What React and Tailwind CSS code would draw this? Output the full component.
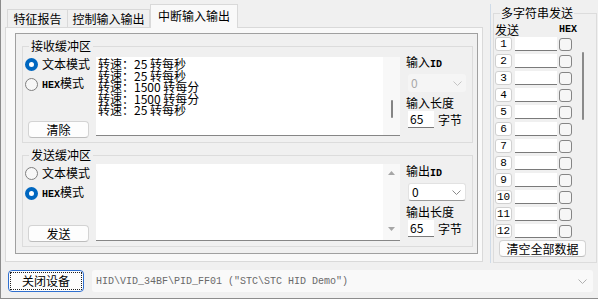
import React from 'react';

const mono = "font-['Liberation_Mono',monospace]";

const Chevron = ({ color = '#9a9a9a' }) => (
  <svg width="9" height="5" viewBox="0 0 9 5">
    <path d="M0.5 0.5 L4.5 4.5 L8.5 0.5" stroke={color} fill="none" strokeWidth="1" />
  </svg>
);

const Radio = ({ checked, children }) => (
  <div className="flex items-center h-[14px]">
    <span
      className={
        checked
          ? 'w-[13px] h-[13px] rounded-full border-[4px] border-[#0067c0] bg-white'
          : 'w-[13px] h-[13px] rounded-full border border-[#7f7f7f] bg-[#f7f7f7]'
      }
    />
    <span className="ml-[4px] leading-[14px]">{children}</span>
  </div>
);

const Hex = () => <span className={`${mono} font-bold text-[10px]`}>HEX</span>;

const Group = ({ title, className, children }) => (
  <div className={`relative border border-[#dcdcdc] ${className}`}>
    <span className="absolute left-[6px] -top-[8px] px-[2px] bg-[#f0f0f0] leading-[14px]">{title}</span>
    {children}
  </div>
);

const Button = ({ children, className }) => (
  <div
    className={`flex items-center justify-center bg-[#fdfdfd] border border-[#d3d3d3] border-b-[#bcbcbc] rounded-[4px] leading-[14px] ${className}`}
  >
    {children}
  </div>
);

const SideFields = ({ kind, disabled }) => (
  <div className="ml-[6px] pt-[8px]">
    <div className="leading-[14px]">
      {kind}
      <span className={`${mono} font-bold text-[10px]`}>ID</span>
    </div>
    <div
      className={`mt-[2px] ml-[2px] w-[58px] h-[18px] flex items-center justify-between pl-[3px] pr-[4px] rounded-[3px] ${
        disabled ? 'bg-[#f5f5f5] text-[#a8a8a8]' : 'bg-white border border-[#e2e2e2] border-b-[#9a9a9a]'
      }`}
    >
      <span className="leading-[14px]">0</span>
      <Chevron color={disabled ? '#c4c4c4' : '#8a8a8a'} />
    </div>
    <div className="mt-[4px] leading-[14px]">{kind}长度</div>
    <div className="mt-[1px] ml-[2px] flex items-center">
      <div className="w-[26px] h-[17px] bg-white border-b border-[#7a7a7a] pl-[2px] leading-[16px]">65</div>
      <span className="ml-[4px] leading-[14px]">字节</span>
    </div>
  </div>
);

const lines = ['转速：25 转每秒', '转速：25 转每秒', '转速：1500 转每分', '转速：1500 转每分', '转速：25 转每秒'];

const Up = () => (
  <svg width="7" height="4" viewBox="0 0 7 4">
    <path d="M0 4 L3.5 0 L7 4 Z" fill="#a6a6a6" />
  </svg>
);
const Down = () => (
  <svg width="7" height="4" viewBox="0 0 7 4">
    <path d="M0 0 L3.5 4 L7 0 Z" fill="#a6a6a6" />
  </svg>
);

export default function App() {
  const rows = Array.from({ length: 12 }, (_, i) => i + 1);

  return (
    <div className="w-[598px] h-[299px] bg-[#f0f0f0] border-l border-b border-[#8c8c8c] overflow-hidden text-[12px] text-black font-['Noto_Sans_CJK_SC',sans-serif]">
      <div className="flex h-[263px] pt-[4px]">
        {/* tabs + panel */}
        <div className="ml-[4px] w-[478px] flex flex-col">
          <div className="h-[23px] flex items-end pl-[2px]">
            <div className="w-[61px] h-[18px] border border-b-0 border-[#d9d9d9] flex items-center justify-center leading-[14px]">
              特征报告
            </div>
            <div className="-ml-px w-[83px] h-[18px] border border-b-0 border-[#d9d9d9] flex items-center justify-center leading-[14px]">
              控制输入输出
            </div>
            <div className="relative z-10 w-[88px] h-[24px] -mb-px border border-b-0 border-[#d9d9d9] bg-[#f9f9f9] flex items-center justify-center pb-[2px] leading-[14px]">
              中断输入输出
            </div>
          </div>
          <div className="h-[235px] border border-[#d9d9d9] bg-[#f9f9f9] pl-[9px] pt-[5px]">
            <div className="w-[463px] h-[221px] border border-[#a0a0a0] bg-[#f0f0f0] pl-[6px] pt-[12px]">
              <Group title="接收缓冲区" className="w-[451px] h-[97px]">
                <div className="flex pl-[2px]">
                  <div className="w-[71px] pt-[10px] flex flex-col">
                    <Radio checked>文本模式</Radio>
                    <div className="mt-[6px]">
                      <Radio>
                        <Hex />模式
                      </Radio>
                    </div>
                    <Button className="mt-[30px] ml-[3px] w-[61px] h-[17px]">清除</Button>
                  </div>
                  <div className="mt-[10px] w-[304px] h-[79px] bg-white border-b border-[#868686] flex">
                    <div className="flex-1 pl-[2px] pt-[1px] leading-[11.5px]">
                      {lines.map((l, i) => (
                        <div key={i}>{l}</div>
                      ))}
                    </div>
                    <div className="w-[17px] bg-[#f8f8f8] flex flex-col items-center pt-[43px]">
                      <div className="w-[2px] h-[18px] rounded bg-[#858585]" />
                    </div>
                  </div>
                  <SideFields kind="输入" disabled />
                </div>
              </Group>

              <Group title="发送缓冲区" className="mt-[12px] w-[451px] h-[92px]">
                <div className="flex pl-[2px]">
                  <div className="w-[71px] pt-[10px] flex flex-col">
                    <Radio>文本模式</Radio>
                    <div className="mt-[6px]">
                      <Radio checked>
                        <Hex />模式
                      </Radio>
                    </div>
                    <Button className="mt-[25px] ml-[3px] w-[61px] h-[17px]">发送</Button>
                  </div>
                  <div className="mt-[8px] w-[304px] h-[77px] bg-white border-b border-[#868686] flex">
                    <div className="flex-1" />
                    <div className="w-[17px] bg-[#f8f8f8] flex flex-col items-center justify-between pt-[7px] pb-[9px]">
                      <Up />
                      <Down />
                    </div>
                  </div>
                  <SideFields kind="输出" />
                </div>
              </Group>
            </div>
          </div>
        </div>

        {/* multi string send */}
        <div className="ml-[7px] h-full border-l border-[#cfdbe8] pl-[2px] pt-[9px]">
          <div className="relative w-[104px] h-[250px] border border-[#dcdcdc]">
            <span className="absolute left-[6px] -top-[8px] px-[1px] bg-[#f0f0f0] leading-[14px]">多字符串发送</span>
            <div className="pl-[1px] pt-[9px]">
              <div className="flex items-center h-[14px] leading-[14px]">
                <span>发送</span>
                <span className={`ml-[40px] ${mono} font-bold text-[10px]`}>HEX</span>
              </div>
              <div className="flex">
                <div className="flex flex-col gap-[3px]">
                  {rows.map((n) => (
                    <div key={n} className="flex items-center h-[14px]">
                      <div
                        className={`w-[17px] h-[14px] bg-white border border-[#d0d0d0] rounded-[3px] flex items-center justify-center ${mono} text-[11px] leading-[12px]`}
                      >
                        {n}
                      </div>
                      <div className="ml-[3px] w-[42px] h-[14px] bg-white border-b border-[#7a7a7a]" />
                      <div className="ml-[2px] w-[13px] h-[13px] rounded-[3px] border border-[#858585] bg-[#f6f6f6]" />
                    </div>
                  ))}
                </div>
                <div className="ml-[10px] mt-[15px] w-[2px] h-[68px] rounded bg-[#8a8a8a]" />
              </div>
              <Button className="mt-[2px] ml-[4px] w-[87px] h-[17px]">清空全部数据</Button>
            </div>
          </div>
        </div>
      </div>

      {/* bottom bar */}
      <div className="flex mt-[7px]">
        <div className="ml-[7px] w-[76px] h-[22px] border border-[#2f6fcf] rounded-[4px] bg-[#fdfdfd] p-[1px]">
          <div className="w-full h-full border border-dotted border-[#202020] flex items-center justify-center leading-[14px]">
            关闭设备
          </div>
        </div>
        <div className="ml-[8px] w-[501px] h-[22px] bg-[#f9f9f9] rounded-[3px] flex items-center justify-between pl-[4px] pr-[6px]">
          <span className={`${mono} text-[10px] text-[#6a6a6a]`}>HID\VID_34BF\PID_FF01 ("STC\STC HID Demo")</span>
          <Chevron color="#b0b0b0" />
        </div>
      </div>
    </div>
  );
}
